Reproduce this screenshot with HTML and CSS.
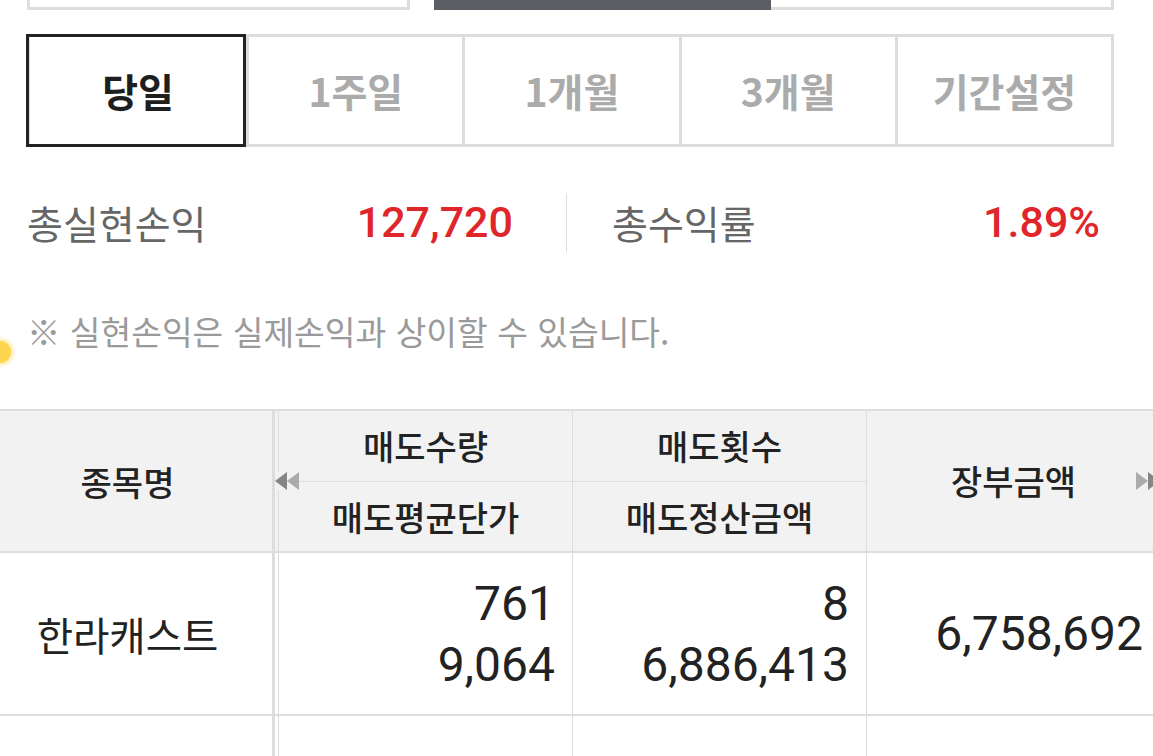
FILE: index.html
```html
<!DOCTYPE html>
<html lang="ko">
<head>
<meta charset="utf-8">
<title>실현손익</title>
<link rel="stylesheet" href="styles.css">
</head>
<body>
<div class="page">
  <div class="topbar">
    <div class="field"></div>
    <div class="toggle">
      <div class="toggle-on"></div>
      <div class="toggle-off"></div>
    </div>
  </div>

  <div class="periods">
    <div class="period active">당일</div>
    <div class="period">1주일</div>
    <div class="period">1개월</div>
    <div class="period">3개월</div>
    <div class="period">기간설정</div>
  </div>

  <div class="summary">
    <div class="sum-item sum-left">
      <span class="sum-label">총실현손익</span>
      <span class="sum-value">127,720</span>
    </div>
    <div class="sum-item sum-right">
      <span class="sum-label">총수익률</span>
      <span class="sum-value">1.89%</span>
    </div>
  </div>

  <p class="notice">※ 실현손익은 실제손익과 상이할 수 있습니다.</p>
  <div class="glow"></div>
</div>

<div class="table">
  <div class="thead">
    <div class="c-name"><span>종목명</span></div>
    <div class="c split">
      <div class="sub top">매도수량</div>
      <div class="sub">매도평균단가</div>
    </div>
    <div class="c split">
      <div class="sub top">매도횟수</div>
      <div class="sub">매도정산금액</div>
    </div>
    <div class="c single">장부금액</div>
    <svg class="arrow arrow-left" viewBox="0 0 24 18" width="24" height="18">
      <polygon points="0,9 12,0 12,18" fill="#858585"/>
      <polygon points="12,9 24,0 24,18" fill="#ababab"/>
    </svg>
    <svg class="arrow arrow-right" viewBox="0 0 24 18" width="24" height="18">
      <polygon points="0,0 12,9 0,18" fill="#ababab"/>
      <polygon points="12,0 24,9 12,18" fill="#858585"/>
    </svg>
  </div>

  <div class="trow">
    <div class="c-name name">한라캐스트</div>
    <div class="c num">
      <div>761</div>
      <div>9,064</div>
    </div>
    <div class="c num">
      <div>8</div>
      <div>6,886,413</div>
    </div>
    <div class="c num">
      <div>6,758,692</div>
    </div>
  </div>

  <div class="trow">
    <div class="c-name name"></div>
    <div class="c num"></div>
    <div class="c num"></div>
    <div class="c num"></div>
  </div>
</div>
</body>
</html>
```

FILE: styles.css
```css
html, body {
  margin: 0;
  padding: 0;
  background: #ffffff;
  overflow: hidden;
}

body {
  width: 1153px;
  height: 756px;
  font-family: "Noto Sans CJK KR", "Noto Sans", sans-serif;
  color: #222222;
}

.page {
  position: relative;
  padding: 0 39px 0 27px;
}

/* top partially visible controls */
.topbar {
  height: 10px;
  overflow: hidden;
  display: flex;
  align-items: flex-end;
  gap: 24px;
}

.field {
  width: 383px;
  height: 40px;
  box-sizing: border-box;
  border: 3px solid #dddddd;
  flex-shrink: 0;
}

.toggle {
  flex: 1;
  height: 40px;
  display: flex;
}

.toggle-on {
  width: 337px;
  background: #5b5f64;
}

.toggle-off {
  flex: 1;
  box-sizing: border-box;
  border: 3px solid #dddddd;
  border-left: none;
}

/* period tabs */
.periods {
  margin-top: 24px;
  height: 113px;
  box-sizing: border-box;
  border: 3px solid #dddddd;
  display: grid;
  grid-template-columns: repeat(5, 1fr);
}

.period {
  display: flex;
  align-items: center;
  justify-content: center;
  font-size: 39px;
  font-weight: 700;
  color: #ababab;
  line-height: 1;
  position: relative;
}

.period + .period {
  border-left: 3px solid #dddddd;
}

.period.active {
  color: #1e1e1e;
}

.period.active::after {
  content: "";
  position: absolute;
  top: -3px;
  bottom: -3px;
  left: -4px;
  right: 0;
  border: 3px solid #222222;
}

/* summary */
.summary {
  margin-top: 46px;
  height: 59px;
  display: flex;
}

.sum-item {
  display: flex;
  align-items: center;
  justify-content: space-between;
}

.sum-left {
  width: 539px;
  padding-right: 53px;
  box-sizing: border-box;
}

.sum-right {
  flex: 1;
  border-left: 1px solid #dddddd;
  padding-left: 45px;
  padding-right: 14px;
}

.sum-label {
  font-size: 39px;
  color: #666666;
  line-height: 1;
}

.sum-value {
  font-family: Roboto, "Noto Sans", sans-serif;
  font-size: 43px;
  font-weight: 500;
  color: #e0262b;
  line-height: 1;
}

.notice {
  margin: 59px 0 0;
  font-size: 33.4px;
  line-height: 40px;
  color: #9a9a9a;
}

.glow {
  position: absolute;
  left: -11px;
  top: 341px;
  width: 22px;
  height: 22px;
  border-radius: 50%;
  background: #ffd54e;
  box-shadow: 0 0 4px 2px rgba(255, 220, 110, 0.7);
}

/* table */
.table {
  margin-top: 58px;
  width: 1160px;
}

.thead,
.trow {
  display: flex;
  position: relative;
}

.thead {
  background: #f2f2f2;
  border-top: 2px solid #dddddd;
  border-bottom: 2px solid #dddddd;
  height: 140px;
}

.trow {
  border-bottom: 2px solid #dddddd;
  height: 161px;
}

.c-name {
  width: 275px;
  box-sizing: border-box;
  border-right: 3px solid #dddddd;
  margin-right: 3px;
  padding-right: 17px;
  display: flex;
  align-items: center;
  justify-content: center;
  flex-shrink: 0;
}

.thead .c-name {
  font-size: 34px;
  font-weight: 500;
}

.c {
  width: 294px;
  flex-shrink: 0;
  box-sizing: border-box;
  border-left: 1px solid #dddddd;
}

.split {
  display: flex;
  flex-direction: column;
}

.sub {
  flex: 1;
  display: flex;
  align-items: center;
  justify-content: center;
  font-size: 34px;
  font-weight: 500;
  line-height: 1;
}

.sub.top {
  flex: 0 0 70px;
  border-bottom: 1px solid #dddddd;
}

.single {
  display: flex;
  align-items: center;
  justify-content: center;
  font-size: 34px;
  font-weight: 500;
  line-height: 1;
}

.arrow {
  position: absolute;
  top: 61px;
  background: #f2f2f2;
  display: block;
}

.arrow-left {
  left: 275px;
}

.arrow-right {
  left: 1136px;
}

.name {
  font-size: 39.5px;
  color: #222222;
}

.num {
  display: flex;
  flex-direction: column;
  justify-content: center;
  align-items: flex-end;
  padding-right: 17px;
  font-family: Roboto, "Noto Sans", sans-serif;
  font-size: 48px;
  line-height: 61px;
  color: #222222;
}
```
